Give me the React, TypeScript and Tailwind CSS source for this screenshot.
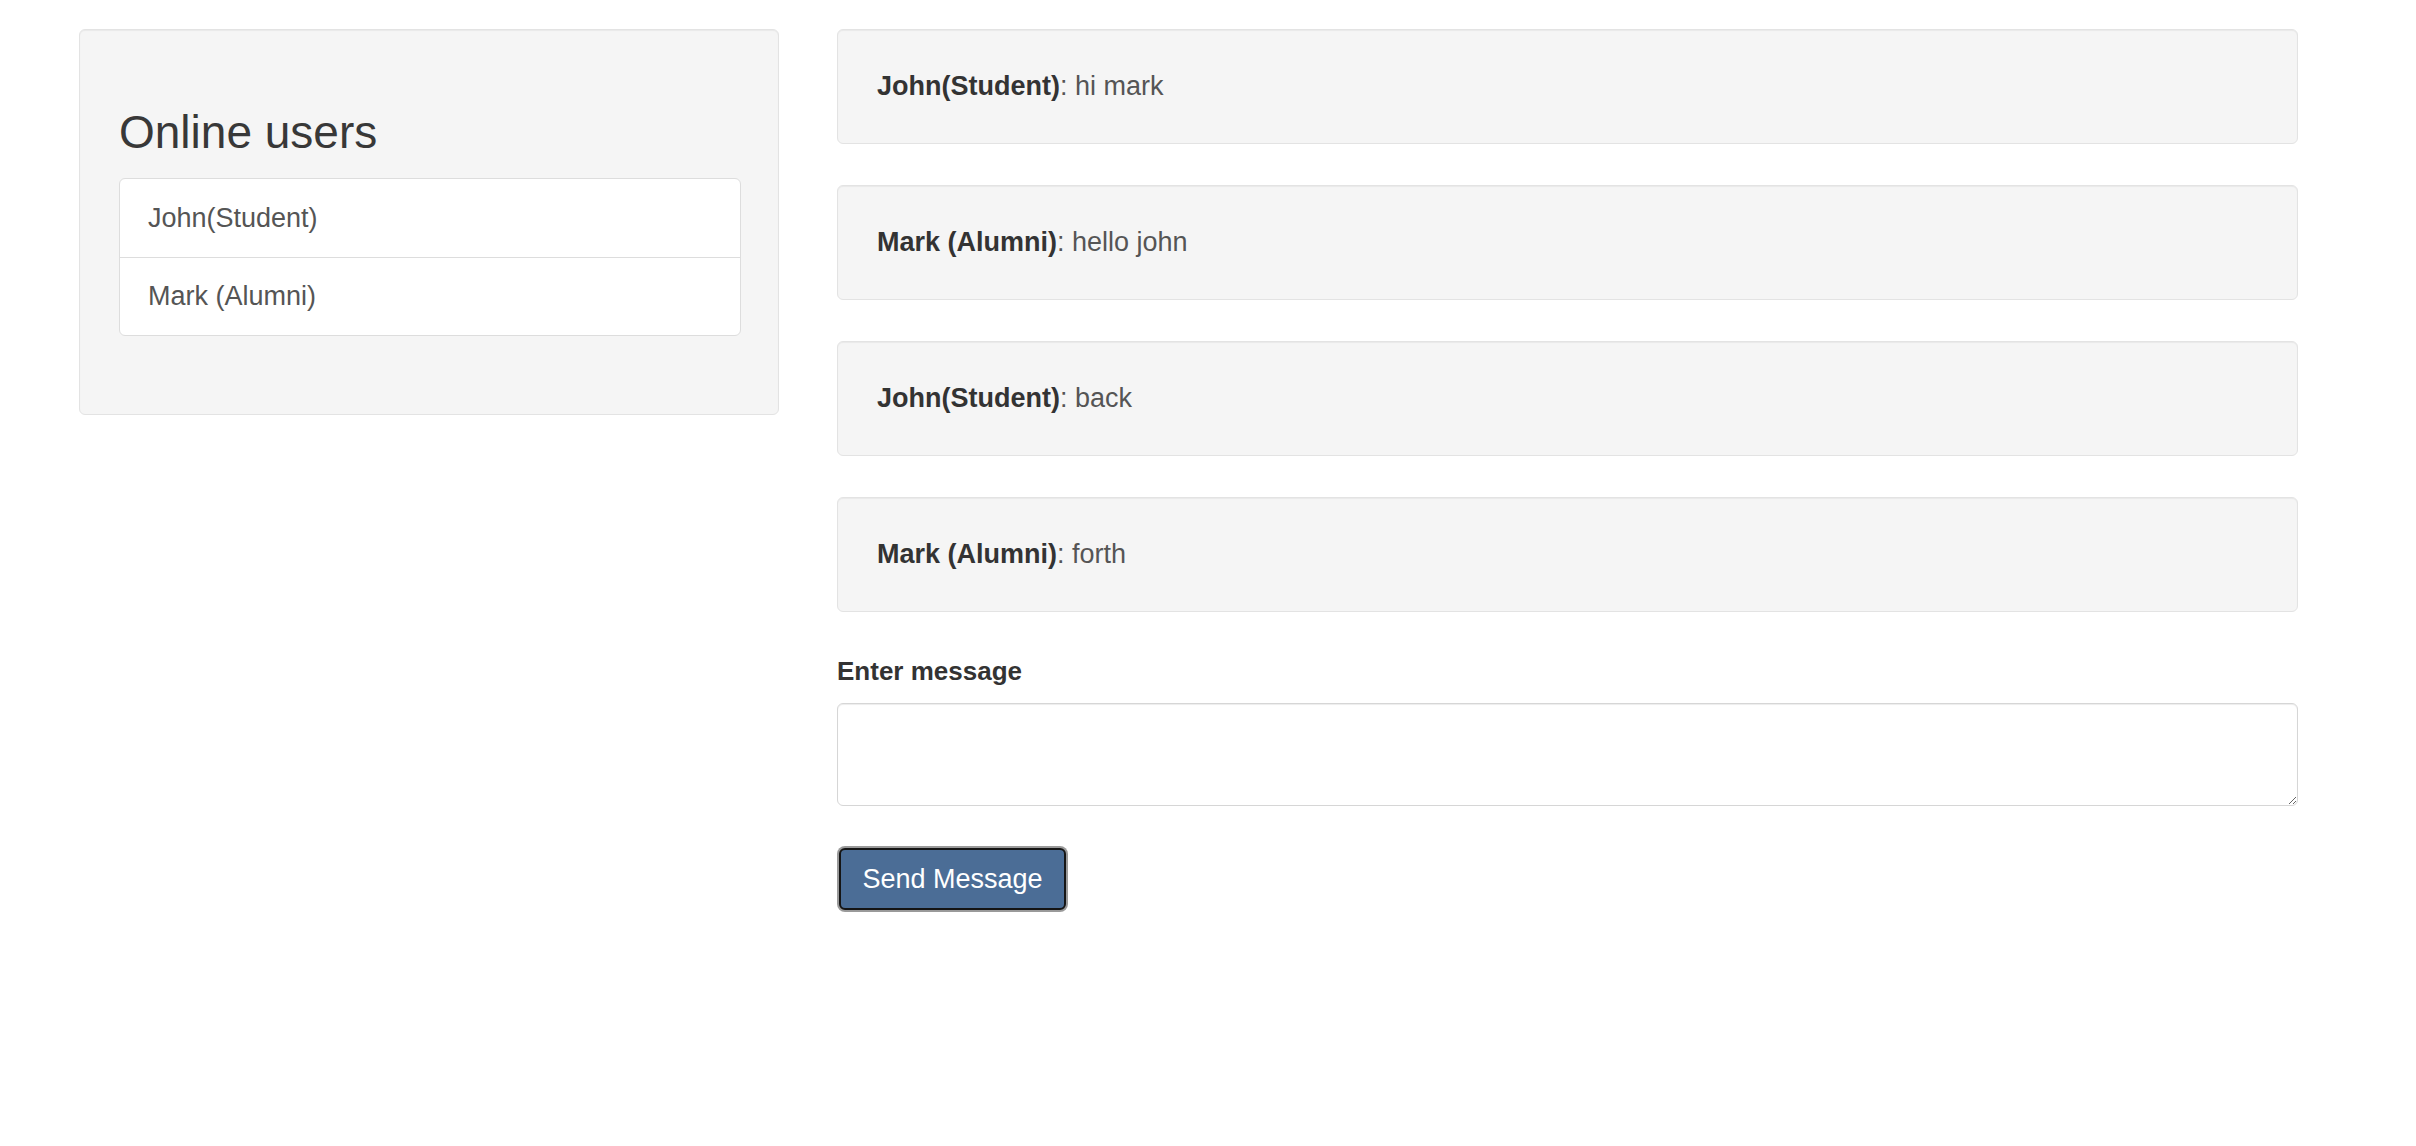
import React from "react";

const messages = [
  { name: "John(Student)", text: "hi mark" },
  { name: "Mark (Alumni)", text: "hello john" },
  { name: "John(Student)", text: "back" },
  { name: "Mark (Alumni)", text: "forth" },
];

const users = ["John(Student)", "Mark (Alumni)"];

export default function App() {
  return (
    <div
      className="min-h-[1146px] w-full bg-white text-[#333]"
      style={{ fontFamily: '"Liberation Sans", Arial, Helvetica, sans-serif' }}
    >
      <div className="flex items-start pl-[79px] pt-[29px]">
        {/* Left panel */}
        <div className="w-[700px] shrink-0 rounded-[6px] border border-[#e3e3e3] bg-[#f5f5f5] pl-[39px] pr-[37px] pt-[77px] pb-[78px] shadow-[inset_0_1px_1px_rgba(0,0,0,0.05)]">
          <h2 className="mb-[20px] text-[46px] font-normal leading-[51px] text-[#383838]">
            Online users
          </h2>
          <div className="rounded-[6px] border border-[#dddddd] bg-white">
            {users.map((u, i) => (
              <div
                key={i}
                className={
                  "flex h-[78px] items-center px-[28px] text-[27px] text-[#555]" +
                  (i > 0 ? " border-t border-[#dddddd]" : "")
                }
              >
                {u}
              </div>
            ))}
          </div>
        </div>

        {/* Right column */}
        <div className="ml-[58px] flex w-[1461px] shrink-0 flex-col">
          {messages.map((m, i) => (
            <div
              key={i}
              className="mb-[41px] h-[115px] rounded-[6px] border border-[#e3e3e3] bg-[#f5f5f5] px-[39px] py-[37px] text-[27px] leading-[39px] shadow-[inset_0_1px_1px_rgba(0,0,0,0.05)]"
            >
              <span className="font-bold text-[#333]">{m.name}</span>
              <span className="text-[#555]">: {m.text}</span>
            </div>
          ))}
          <label className="mb-[13px] block text-[26px] font-bold leading-[37px] text-[#333]">
            Enter message
          </label>
          <textarea className="block h-[103px] w-full rounded-[6px] border border-[#d6d6d6] bg-white px-[20px] py-[12px] text-[27px] shadow-[inset_0_1px_1px_rgba(0,0,0,0.075)] outline-none" />
          <div className="mt-[42px]">
            <button className="ml-[2px] h-[62px] w-[227px] rounded-[6px] border-2 border-[#151515] bg-[#4b6d96] text-[27px] leading-none text-white shadow-[0_0_0_2px_#9a9a9a]">
              Send Message
            </button>
          </div>
        </div>
      </div>
    </div>
  );
}
